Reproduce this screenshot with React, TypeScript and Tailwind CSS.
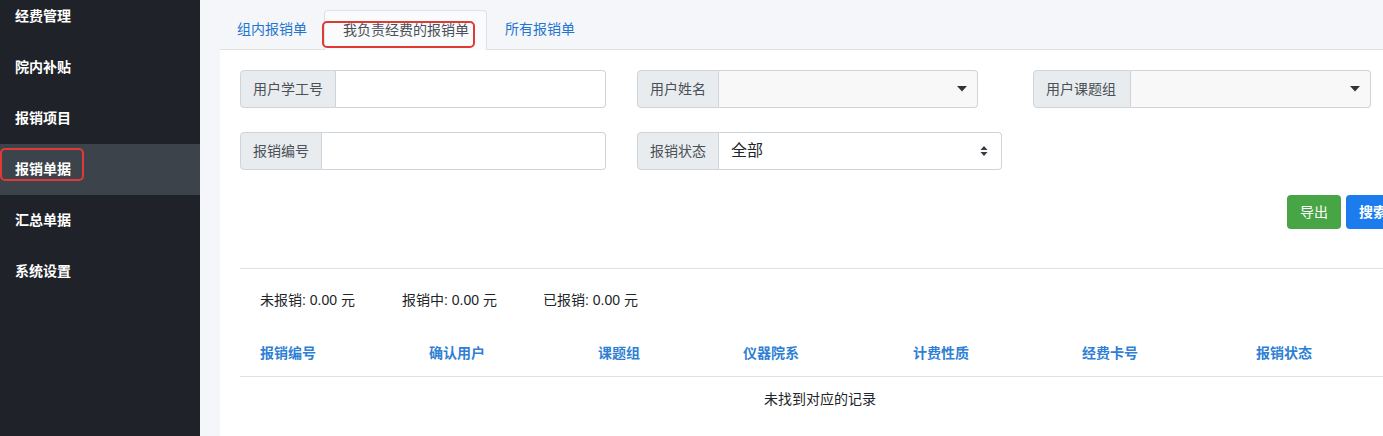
import React from "react";

const FONT = { fontFamily: '"Liberation Sans", "Noto Sans CJK SC", sans-serif' };

const MENU = ["经费管理", "院内补贴", "报销项目", "报销单据", "汇总单据", "系统设置"];

function Caret() {
  return (
    <svg width="10" height="6" viewBox="0 0 10 6" className="shrink-0">
      <path d="M0 0 L10 0 L5 5.5 Z" fill="#333" />
    </svg>
  );
}

function UpDown() {
  return (
    <svg width="8" height="12" viewBox="0 0 8 12" className="shrink-0">
      <path d="M4 1 L7.5 5 L0.5 5 Z" fill="#343a40" />
      <path d="M0.5 7 L7.5 7 L4 11 Z" fill="#343a40" />
    </svg>
  );
}

function Field({ label, labelW, width, kind, value }: { label: string; labelW: number; width: number; kind: "text" | "select2" | "select"; value?: string }) {
  return (
    <div className="flex h-[38px] shrink-0" style={{ width }}>
      <div
        className="flex items-center pl-[12px] h-full bg-[#e9ecef] border border-[#ced4da] rounded-l-[4px] text-[14px] text-[#495057]"
        style={{ width: labelW }}
      >
        {label}
      </div>
      <div
        className={`flex-1 flex items-center justify-between h-full border border-l-0 border-[#ced4da] rounded-r-[4px] ${
          kind === "select2" ? "bg-[#f8f8f8] pr-[10px]" : "bg-white pr-[13px]"
        }`}
      >
        <span className="pl-[12px] text-[16px] text-[#212529]">{value}</span>
        {kind === "select2" && <Caret />}
        {kind === "select" && <UpDown />}
      </div>
    </div>
  );
}

export default function App() {
  return (
    <div className="flex w-[1383px] h-[436px] overflow-hidden bg-[#f4f6f9]" style={FONT}>
      <aside className="w-[200px] shrink-0 h-full bg-[#1f2329] overflow-hidden">
        <div className="-mt-[9px]">
          {MENU.map((m, i) => (
            <div
              key={m}
              className={`relative h-[51px] flex items-center pl-[15px] text-[14px] font-bold text-white ${
                i === 3 ? "bg-[#3c434a]" : ""
              }`}
            >
              {m}
              {i === 3 && (
                <div className="absolute left-0 top-[4px] w-[84px] h-[33px] border-2 border-[#e03a35] rounded-[5px]" />
              )}
            </div>
          ))}
        </div>
      </aside>

      <main className="flex-1 h-full overflow-hidden pl-[20px]">
        <div className="w-[1200px]">
          {/* tabs */}
          <div className="flex h-[50px] pt-[11px] items-end border-b border-[#dee2e6] text-[14px]">
            <div className="h-[39px] flex items-center pl-[17px] pr-[17px] text-[#1f75cf]">组内报销单</div>
            <div className="relative h-[40px] -mb-px flex items-center pl-[18px] pr-[17px] bg-[#fafbfc] border border-b-0 border-[#dee2e6] rounded-t-[4px] text-[#495057]">
              我负责经费的报销单
              <div className="absolute left-[-3px] top-[10px] w-[153px] h-[27px] border-2 border-[#e03a35] rounded-[5px]" />
            </div>
            <div className="h-[39px] flex items-center pl-[18px] text-[#1f75cf]">所有报销单</div>
          </div>

          {/* card */}
          <div className="bg-white h-[386px] px-[20px] pt-[20px]">
            <div className="flex gap-[31px]">
              <Field label="用户学工号" labelW={96} width={366} kind="text" />
              <Field label="用户姓名" labelW={82} width={341} kind="select2" />
              <div className="ml-[24px]">
                <Field label="用户课题组" labelW={98} width={338} kind="select2" />
              </div>
            </div>
            <div className="flex gap-[31px] mt-[24px]">
              <Field label="报销编号" labelW={82} width={366} kind="text" />
              <Field label="报销状态" labelW={82} width={365} kind="select" value="全部" />
            </div>

            <div className="flex justify-end gap-[5px] mt-[25px] text-[14px] text-white">
              <button className="w-[54px] h-[34px] bg-[#48a546] rounded-[4px]">导出</button>
              <button className="w-[54px] h-[34px] bg-[#1c7ced] rounded-[4px] font-bold">搜索</button>
            </div>

            <div className="mt-[39px] border-t border-[#dee2e6]" />

            <div className="flex h-[62px] items-center pl-[20px] text-[14px] text-[#212529]">
              <span className="w-[142px]">未报销: 0.00 元</span>
              <span className="w-[141px]">报销中: 0.00 元</span>
              <span>已报销: 0.00 元</span>
            </div>

            <div className="flex h-[46px] items-center pl-[20px] border-b border-[#dee2e6] text-[14px] font-bold text-[#2f7fd4]">
              <span className="w-[169px]">报销编号</span>
              <span className="w-[169px]">确认用户</span>
              <span className="w-[145px]">课题组</span>
              <span className="w-[170px]">仪器院系</span>
              <span className="w-[169px]">计费性质</span>
              <span className="w-[174px]">经费卡号</span>
              <span>报销状态</span>
            </div>

            <div className="h-[45px] flex items-center justify-center text-[14px] text-[#212529]">未找到对应的记录</div>
          </div>
        </div>
      </main>
    </div>
  );
}
